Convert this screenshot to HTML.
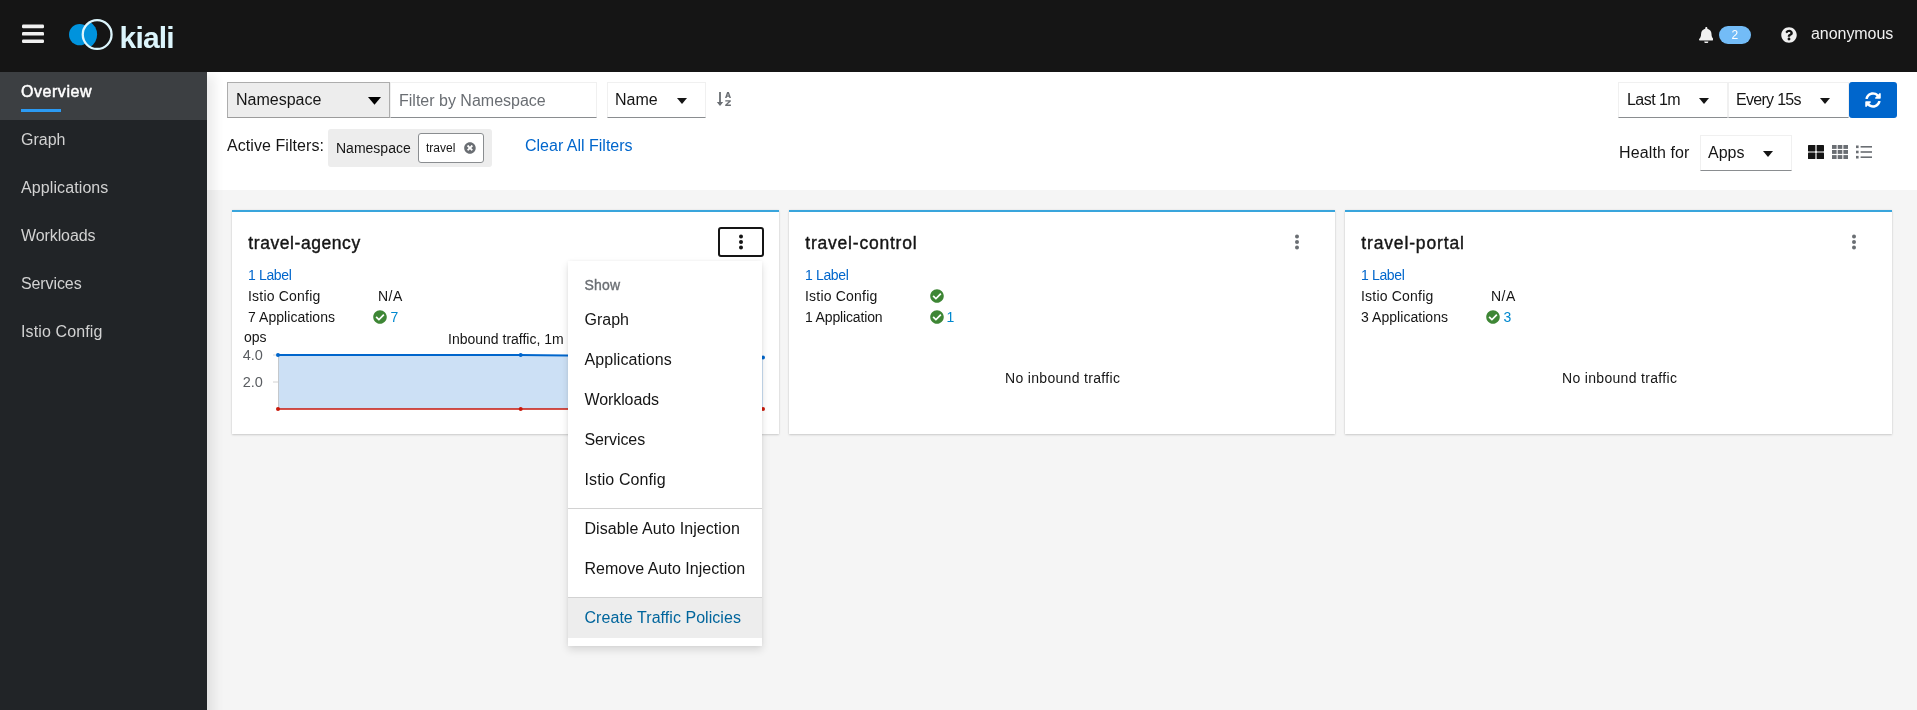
<!DOCTYPE html>
<html>
<head>
<meta charset="utf-8">
<title>Kiali</title>
<style>
*{box-sizing:border-box;margin:0;padding:0}
html,body{width:1917px;height:710px;overflow:hidden;background:#f5f5f5;font-family:"Liberation Sans",sans-serif;color:#151515}
#root{position:absolute;left:0;top:0;width:1917px;height:710px;will-change:transform}
.abs{position:absolute}
.t{position:absolute;white-space:nowrap;line-height:1}
#hdr{position:absolute;left:0;top:0;width:1917px;height:72px;background:#151515;z-index:5}
#side{position:absolute;left:0;top:72px;width:207px;height:638px;background:#212427}
#side .act{position:absolute;left:0;top:0;width:207px;height:48px;background:#3c3f42}
#side .ul{position:absolute;left:21px;top:37px;width:40px;height:3px;background:#2b9af3}
#side .t{left:21px;font-size:16px;color:#d2d2d2}
#tb{position:absolute;left:207px;top:72px;width:1710px;height:118px;background:#fff}
#shadow{position:absolute;left:0;top:72px;width:207px;height:660px;box-shadow:12px 0 10px -4px rgba(3,3,3,.075);pointer-events:none}
.sel{position:absolute;height:36px;background:#fff;border:1px solid #f0f0f0;border-bottom:1px solid #8a8d90}
.card{position:absolute;top:210px;height:224px;background:#fff;border-top:2px solid #39a5dc;box-shadow:0 1px 2px rgba(3,3,3,.16),0 0 2px rgba(3,3,3,.08)}
.s14{font-size:14px}
.ttl{font-size:17.5px;color:#151515;-webkit-text-stroke:.4px #151515}
.link{color:#0066cc}
.lb{color:#0088ce}
#menu{position:absolute;left:568px;top:261px;width:194px;height:385px;background:#fff;box-shadow:0 4px 8px rgba(3,3,3,.12),0 0 4px rgba(3,3,3,.06)}
#menu .t{left:16.5px;font-size:16px;color:#151515}
#menu .sep{position:absolute;left:0;width:194px;height:1px;background:#d2d2d2}
</style>
</head>
<body>
<div id="root">
<!-- HEADER -->
<div id="hdr">
  <svg class="abs" style="left:22px;top:24px" width="23" height="21" viewBox="0 0 23 21"><rect x="0" y="0.6" width="22" height="3.6" rx="1.2" fill="#f0f0f0"/><rect x="0" y="8" width="22" height="3.6" rx="1.2" fill="#f0f0f0"/><rect x="0" y="15.4" width="22" height="3.6" rx="1.2" fill="#f0f0f0"/></svg>
  <svg class="abs" style="left:60px;top:12px" width="60" height="46" viewBox="60 12 60 46">
    <circle cx="79.7" cy="34.6" r="10.7" fill="#0093dd"/>
    <path d="M90.07 22.01 A14.65 14.65 0 0 1 90.07 47.09 A14.4 14.4 0 0 1 90.07 22.01Z" fill="#0093dd"/>
    <circle cx="97.15" cy="34.55" r="14.4" fill="none" stroke="#dcf5fc" stroke-width="2.3"/>
  </svg>
  <div class="t" style="left:119.5px;top:23px;font-size:30px;font-weight:bold;color:#dcf5fc;letter-spacing:-0.8px">kiali</div>
  <!-- right tools -->
  <svg class="abs" style="left:1698.6px;top:26.6px" width="14.6" height="16.6" viewBox="0 0 448 512"><path fill="#f0f0f0" d="M224 512c35.32 0 63.97-28.65 63.97-64H160.03c0 35.35 28.65 64 63.97 64zm215.39-149.71c-19.32-20.76-55.47-51.99-55.47-154.29 0-77.7-54.48-139.9-127.94-155.16V32c0-17.67-14.32-32-31.98-32s-31.98 14.33-31.98 32v20.84C118.56 68.1 64.08 130.3 64.08 208c0 102.3-36.15 133.53-55.47 154.29-6 6.45-8.66 14.16-8.61 21.71.11 16.4 12.98 32 32.1 32h383.8c19.12 0 32-15.6 32.1-32 .05-7.55-2.61-15.27-8.61-21.71z"/></svg>
  <div class="abs" style="left:1719px;top:26px;width:32px;height:18px;border-radius:9px;background:#73bcf7"></div>
  <div class="t" style="left:1731.6px;top:29.2px;font-size:12px;color:#fff">2</div>
  <svg class="abs" style="left:1781px;top:27px" width="16" height="16" viewBox="0 0 512 512"><path fill="#f0f0f0" d="M504 256c0 136.997-111.043 248-248 248S8 392.997 8 256C8 119.083 119.043 8 256 8s248 111.083 248 248zM262.655 90c-54.497 0-89.255 22.957-116.549 63.758-3.536 5.286-2.353 12.415 2.715 16.258l34.699 26.31c5.205 3.947 12.621 3.008 16.665-2.122 17.864-22.658 30.113-35.797 57.303-35.797 20.429 0 45.698 13.148 45.698 32.958 0 14.976-12.363 22.667-32.534 33.976C247.128 238.528 216 254.941 216 296v4c0 6.627 5.373 12 12 12h56c6.627 0 12-5.373 12-12v-1.333c0-28.462 83.186-29.647 83.186-106.667 0-58.002-60.165-102-116.531-102zM256 338c-25.365 0-46 20.635-46 46 0 25.364 20.635 46 46 46s46-20.636 46-46c0-25.365-20.635-46-46-46z"/></svg>
  <div class="t" style="left:1811px;top:25.9px;font-size:16px;letter-spacing:-.05px;color:#f0f0f0">anonymous</div>
</div>

<!-- SIDEBAR -->
<div id="side">
  <div class="act"></div><div class="ul"></div>
  <div class="t" style="top:11.5px;color:#fff;font-size:16px;letter-spacing:.55px;-webkit-text-stroke:.5px #fff">Overview</div>
  <div class="t" style="top:59.5px">Graph</div>
  <div class="t" style="top:107.5px;letter-spacing:.1px">Applications</div>
  <div class="t" style="top:155.5px;letter-spacing:-.1px">Workloads</div>
  <div class="t" style="top:203.5px;letter-spacing:-.1px">Services</div>
  <div class="t" style="top:251.5px;letter-spacing:.12px">Istio Config</div>
</div>

<!-- TOOLBAR -->
<div id="tb"></div>
<div id="shadow"></div>

<div class="sel" style="left:227px;top:82px;width:163px;background:#ededed;border:1px solid #adadad;border-bottom-color:#9c9c9c"></div>
<div class="t" style="left:236px;top:92px;font-size:16px">Namespace</div>
<svg class="abs" style="left:367.5px;top:96.8px" width="13" height="7.8" viewBox="0 0 13 7.8"><path d="M0 0h13l-6.500 7.800z" fill="#000"/></svg>
<div class="sel" style="left:390px;top:82px;width:207px"></div>
<div class="t" style="left:399px;top:92.8px;font-size:16px;color:#6a6e73">Filter by Namespace</div>
<div class="sel" style="left:607px;top:82px;width:99px"></div>
<div class="t" style="left:615px;top:92px;font-size:16px">Name</div>
<svg class="abs" style="left:677px;top:98px" width="10" height="6" viewBox="0 0 10 6"><path d="M0 0h10l-5 6z" fill="#151515"/></svg>
<!-- sort icon -->
<svg class="abs" style="left:716px;top:91px" width="16" height="17" viewBox="0 0 16 17"><g fill="#6a6e73"><rect x="3.1" y="1" width="1.8" height="11"/><path d="M0.8 10.9h6.4l-3.200 4.100z"/><path fill-rule="evenodd" d="M9 6.900L11.100 1h1.800L15 6.900h-1.600l-.4-1.200h-2l-.4 1.200zM11.400 4.500h1.200L12 2.700z"/><path d="M9.300 9.300h5.500v1.200l-3.500 3.100h3.600v1.300H9.200v-1.200l3.500-3.100H9.300z"/></g></svg>

<div class="t" style="left:227px;top:138.3px;font-size:16px;letter-spacing:.07px">Active Filters:</div>
<div class="abs" style="left:328px;top:129px;width:164px;height:38px;background:#ededed;border-radius:3px"></div>
<div class="t" style="left:336px;top:141px;font-size:14px">Namespace</div>
<div class="abs" style="left:418px;top:133px;width:66px;height:30px;background:#fff;border:1px solid #8a8d90;border-radius:3px"></div>
<div class="t" style="left:426px;top:142px;font-size:12px">travel</div>
<svg class="abs" style="left:464.1px;top:142px" width="11.900" height="11.900" viewBox="0 0 512 512"><path fill="#6a6e73" d="M256 8C119 8 8 119 8 256s111 248 248 248 248-111 248-248S393 8 256 8zm121.6 313.100c4.700 4.700 4.700 12.300 0 17L338 377.600c-4.700 4.700-12.300 4.700-17 0L256 312l-65.100 65.600c-4.700 4.700-12.300 4.700-17 0L134.400 338c-4.700-4.700-4.700-12.300 0-17l65.600-65-65.600-65.100c-4.700-4.700-4.700-12.300 0-17l39.600-39.600c4.700-4.700 12.300-4.700 17 0l65 65.700 65.100-65.600c4.700-4.700 12.300-4.700 17 0l39.600 39.600c4.700 4.700 4.700 12.300 0 17L312 256l65.600 65.100z"/></svg>
<div class="t link" style="left:525px;top:138.3px;font-size:16px">Clear All Filters</div>

<!-- right toolbar -->
<div class="sel" style="left:1618px;top:82px;width:110px"></div>
<div class="t" style="left:1627px;top:92.1px;font-size:16px;letter-spacing:-.55px">Last 1m</div>
<svg class="abs" style="left:1699px;top:98px" width="10" height="6" viewBox="0 0 10 6"><path d="M0 0h10l-5 6z" fill="#151515"/></svg>
<div class="sel" style="left:1728px;top:82px;width:121px"></div>
<div class="t" style="left:1736px;top:92.1px;font-size:16px;letter-spacing:-.7px">Every 15s</div>
<svg class="abs" style="left:1820px;top:98px" width="10" height="6" viewBox="0 0 10 6"><path d="M0 0h10l-5 6z" fill="#151515"/></svg>
<div class="abs" style="left:1849px;top:82px;width:48px;height:36px;background:#0066cc;border-radius:3px"></div>
<svg class="abs" style="left:1865px;top:92px" width="16" height="16" viewBox="0 0 512 512"><path fill="#fff" d="M370.72 133.280C339.458 104.008 298.888 87.962 255.848 88c-77.458.068-144.328 53.178-162.791 126.850-1.344 5.363-6.122 9.150-11.651 9.150H24.103c-7.498 0-13.194-6.807-11.807-14.176C33.933 94.924 134.813 8 256 8c66.448 0 126.791 26.136 171.315 68.685L463.030 40.970C478.149 25.851 504 36.559 504 57.941V192c0 13.255-10.745 24-24 24H345.941c-21.382 0-32.090-25.851-16.971-40.971l41.750-41.749zM32 296h134.059c21.382 0 32.090 25.851 16.971 40.971l-41.750 41.750c31.262 29.273 71.835 45.319 114.876 45.280 77.418-.070 144.315-53.144 162.787-126.849 1.344-5.363 6.122-9.150 11.651-9.150h57.304c7.498 0 13.194 6.807 11.807 14.176C478.067 417.076 377.187 504 256 504c-66.448 0-126.791-26.136-171.315-68.685L48.970 471.030C33.851 486.149 8 475.441 8 454.059V320c0-13.255 10.745-24 24-24z"/></svg>

<div class="t" style="left:1619px;top:145.2px;font-size:16px;letter-spacing:.12px">Health for</div>
<div class="sel" style="left:1700px;top:135px;width:92px"></div>
<div class="t" style="left:1708px;top:145.2px;font-size:16px">Apps</div>
<svg class="abs" style="left:1763px;top:151px" width="10" height="6" viewBox="0 0 10 6"><path d="M0 0h10l-5 6z" fill="#151515"/></svg>
<!-- view icons -->
<svg class="abs" style="left:1808px;top:145px" width="16" height="14" viewBox="0 0 16 14"><g fill="#151515"><rect x="0" y="0" width="7.4" height="6.4" rx=".6"/><rect x="8.6" y="0" width="7.4" height="6.4" rx=".6"/><rect x="0" y="7.6" width="7.4" height="6.4" rx=".6"/><rect x="8.6" y="7.6" width="7.4" height="6.4" rx=".6"/></g></svg>
<svg class="abs" style="left:1832px;top:145px" width="16" height="14" viewBox="0 0 16 14"><g fill="#6a6e73"><rect x="0" y="0" width="4.6" height="3.9"/><rect x="5.7" y="0" width="4.6" height="3.9"/><rect x="11.4" y="0" width="4.6" height="3.9"/><rect x="0" y="5" width="4.6" height="3.9"/><rect x="5.7" y="5" width="4.6" height="3.9"/><rect x="11.4" y="5" width="4.6" height="3.9"/><rect x="0" y="10.100" width="4.6" height="3.9"/><rect x="5.7" y="10.100" width="4.6" height="3.9"/><rect x="11.4" y="10.100" width="4.6" height="3.9"/></g></svg>
<svg class="abs" style="left:1856px;top:145px" width="16" height="14" viewBox="0 0 16 14"><g fill="#6a6e73"><rect x="0" y="0.5" width="2.6" height="2.6"/><rect x="0" y="5.7" width="2.6" height="2.6"/><rect x="0" y="10.9" width="2.6" height="2.6"/><rect x="4.6" y="1" width="11.4" height="1.6"/><rect x="4.6" y="6.2" width="11.4" height="1.6"/><rect x="4.6" y="11.4" width="11.4" height="1.6"/></g></svg>

<!-- CARDS -->
<div class="card" style="left:232px;width:547px"></div>
<div class="card" style="left:789px;width:546px"></div>
<div class="card" style="left:1345px;width:547px"></div>

<!-- card 1 content -->
<div class="t ttl" style="left:248.3px;top:235.4px;letter-spacing:.57px">travel-agency</div>
<div class="abs" style="left:718px;top:227px;width:46px;height:30px;border:2px solid #151515;border-radius:3px;background:#fff"></div>
<svg class="abs kb" style="left:738px;top:234px" width="6" height="16" viewBox="0 0 6 16"><g fill="#151515"><circle cx="3" cy="2.4" r="2"/><circle cx="3" cy="8" r="2"/><circle cx="3" cy="13.6" r="2"/></g></svg>
<div class="t s14 link" style="left:248px;top:267.7px;letter-spacing:-.35px">1 Label</div>
<div class="t s14" style="left:248px;top:288.7px;letter-spacing:.2px">Istio Config</div>
<div class="t s14" style="left:378px;top:288.7px;letter-spacing:.5px">N/A</div>
<div class="t s14" style="left:248px;top:309.7px;letter-spacing:.05px">7 Applications</div>
<svg class="abs" style="left:373px;top:310px" width="14" height="14" viewBox="0 0 512 512"><path fill="#3e8635" d="M504 256c0 136.967-111.033 248-248 248S8 392.967 8 256 119.033 8 256 8s248 111.033 248 248zM227.314 387.314l184-184c6.248-6.248 6.248-16.379 0-22.627l-22.627-22.627c-6.248-6.249-16.379-6.249-22.628 0L216 308.118l-70.059-70.059c-6.248-6.248-16.379-6.248-22.628 0l-22.627 22.627c-6.248 6.248-6.248 16.379 0 22.627l104 104c6.249 6.249 16.379 6.249 22.628.001z"/></svg>
<div class="t s14 lb" style="left:390.6px;top:309.7px">7</div>
<!-- chart -->
<div class="t s14" style="left:244px;top:330.3px">ops</div>
<div class="t s14" style="left:448px;top:331.6px">Inbound traffic, 1m</div>
<div class="t" style="left:242.7px;top:348px;font-size:14.5px;color:#5a5d61">4.0</div>
<div class="t" style="left:242.7px;top:375px;font-size:14.5px;color:#5a5d61">2.0</div>
<svg class="abs" style="left:270px;top:350px" width="500" height="64" viewBox="0 0 500 64">
  <path d="M3 5h5M3 32h5" stroke="#d2d2d2" stroke-width="1"/>
  <path d="M8 5 L250 5 L493 7.5 L493 59 L8 59Z" fill="#cce0f5"/>
  <path d="M8.5 5V59" stroke="#c4c8cc" stroke-width="1"/>
  <path d="M8 5 L250 5 L493 7.500" fill="none" stroke="#0066cc" stroke-width="2"/>
  <path d="M8 59 L493 59" fill="none" stroke="#c9190b" stroke-width="1.3"/>
  <g fill="#0066cc"><circle cx="8" cy="5" r="2"/><circle cx="250.7" cy="5" r="2"/><circle cx="493" cy="7.500" r="2"/></g>
  <g fill="#c9190b"><circle cx="8" cy="59" r="2"/><circle cx="250.7" cy="59" r="2"/><circle cx="493" cy="59" r="2"/></g>
</svg>

<!-- card 2 content -->
<div class="t ttl" style="left:805.3px;top:235.4px;letter-spacing:.78px">travel-control</div>
<svg class="abs kb" style="left:1294px;top:234px" width="6" height="16" viewBox="0 0 6 16"><g fill="#6a6e73"><circle cx="3" cy="2.4" r="2"/><circle cx="3" cy="8" r="2"/><circle cx="3" cy="13.6" r="2"/></g></svg>
<div class="t s14 link" style="left:805px;top:267.7px;letter-spacing:-.35px">1 Label</div>
<div class="t s14" style="left:805px;top:288.7px;letter-spacing:.2px">Istio Config</div>
<svg class="abs" style="left:930px;top:289px" width="14" height="14" viewBox="0 0 512 512"><path fill="#3e8635" d="M504 256c0 136.967-111.033 248-248 248S8 392.967 8 256 119.033 8 256 8s248 111.033 248 248zM227.314 387.314l184-184c6.248-6.248 6.248-16.379 0-22.627l-22.627-22.627c-6.248-6.249-16.379-6.249-22.628 0L216 308.118l-70.059-70.059c-6.248-6.248-16.379-6.248-22.628 0l-22.627 22.627c-6.248 6.248-6.248 16.379 0 22.627l104 104c6.249 6.249 16.379 6.249 22.628.001z"/></svg>
<div class="t s14" style="left:805px;top:309.7px;letter-spacing:-.15px">1 Application</div>
<svg class="abs" style="left:930px;top:310px" width="14" height="14" viewBox="0 0 512 512"><path fill="#3e8635" d="M504 256c0 136.967-111.033 248-248 248S8 392.967 8 256 119.033 8 256 8s248 111.033 248 248zM227.314 387.314l184-184c6.248-6.248 6.248-16.379 0-22.627l-22.627-22.627c-6.248-6.249-16.379-6.249-22.628 0L216 308.118l-70.059-70.059c-6.248-6.248-16.379-6.248-22.628 0l-22.627 22.627c-6.248 6.248-6.248 16.379 0 22.627l104 104c6.249 6.249 16.379 6.249 22.628.001z"/></svg>
<div class="t s14 lb" style="left:946.6px;top:309.7px">1</div>
<div class="t s14" style="left:1005px;top:371px;letter-spacing:.32px">No inbound traffic</div>

<!-- card 3 content -->
<div class="t ttl" style="left:1361.3px;top:235.4px;letter-spacing:.85px">travel-portal</div>
<svg class="abs kb" style="left:1851px;top:234px" width="6" height="16" viewBox="0 0 6 16"><g fill="#6a6e73"><circle cx="3" cy="2.4" r="2"/><circle cx="3" cy="8" r="2"/><circle cx="3" cy="13.6" r="2"/></g></svg>
<div class="t s14 link" style="left:1361px;top:267.7px;letter-spacing:-.35px">1 Label</div>
<div class="t s14" style="left:1361px;top:288.7px;letter-spacing:.2px">Istio Config</div>
<div class="t s14" style="left:1491px;top:288.7px;letter-spacing:.5px">N/A</div>
<div class="t s14" style="left:1361px;top:309.7px;letter-spacing:.05px">3 Applications</div>
<svg class="abs" style="left:1486px;top:310px" width="14" height="14" viewBox="0 0 512 512"><path fill="#3e8635" d="M504 256c0 136.967-111.033 248-248 248S8 392.967 8 256 119.033 8 256 8s248 111.033 248 248zM227.314 387.314l184-184c6.248-6.248 6.248-16.379 0-22.627l-22.627-22.627c-6.248-6.249-16.379-6.249-22.628 0L216 308.118l-70.059-70.059c-6.248-6.248-16.379-6.248-22.628 0l-22.627 22.627c-6.248 6.248-6.248 16.379 0 22.627l104 104c6.249 6.249 16.379 6.249 22.628.001z"/></svg>
<div class="t s14 lb" style="left:1503.6px;top:309.7px">3</div>
<div class="t s14" style="left:1562px;top:371px;letter-spacing:.32px">No inbound traffic</div>

<!-- DROPDOWN MENU -->
<div id="menu">
  <div class="t" style="top:17px;font-size:14px;color:#6a6e73;-webkit-text-stroke:.35px #6a6e73;letter-spacing:.2px">Show</div>
  <div class="t" style="top:50.9px">Graph</div>
  <div class="t" style="top:90.9px;letter-spacing:.08px">Applications</div>
  <div class="t" style="top:130.9px;letter-spacing:-.1px">Workloads</div>
  <div class="t" style="top:170.9px;letter-spacing:-.1px">Services</div>
  <div class="t" style="top:210.9px;letter-spacing:.1px">Istio Config</div>
  <div class="sep" style="top:247px"></div>
  <div class="t" style="top:259.8px;letter-spacing:.07px">Disable Auto Injection</div>
  <div class="t" style="top:299.8px;letter-spacing:.03px">Remove Auto Injection</div>
  <div class="sep" style="top:336px"></div>
  <div class="abs" style="left:0;top:337px;width:194px;height:40px;background:#ededed"></div>
  <div class="t" style="top:348.6px;color:#00659c;letter-spacing:.05px">Create Traffic Policies</div>
</div>

</div>
</body>
</html>
